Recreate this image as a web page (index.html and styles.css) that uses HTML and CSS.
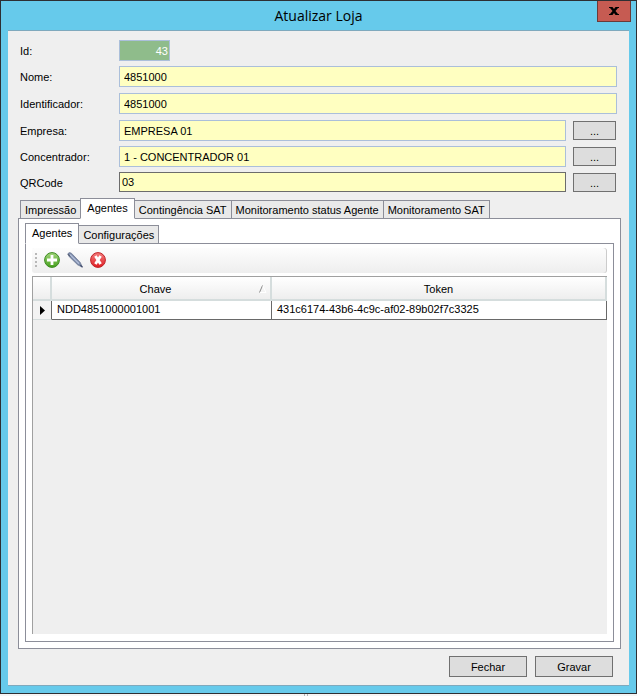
FILE: index.html
```html
<!DOCTYPE html>
<html lang="pt-BR">
<head>
    <meta charset="UTF-8">
    <meta name="viewport" content="width=device-width, initial-scale=1.0">
    <title>Atualizar Loja</title>
    <link rel="stylesheet" href="styles.css">
</head>
<body>
    <div class="window">
        <header class="titlebar">
            <h1>Atualizar Loja</h1>
            <button class="close" type="button" aria-label="Fechar janela">
                <svg width="10" height="8" viewBox="0 0 10 8">
                    <path d="M0 0H3.5L5 2L6.5 0H10V1H9L6.5 4L9 7H10V8H6.5L5 6L3.5 8H0V7H1L3.5 4L1 1H0Z" fill="#000" />
                </svg>
            </button>
        </header>

        <form class="client">
            <!-- Store fields -->
            <div class="fields">
                <div class="row">
                    <label for="id">Id:</label>
                    <input class="id" id="id" type="text" value="43" readonly>
                </div>
                <div class="row tall">
                    <label for="nome">Nome:</label>
                    <input id="nome" type="text" value="4851000">
                </div>
                <div class="row tall">
                    <label for="identificador">Identificador:</label>
                    <input id="identificador" type="text" value="4851000">
                </div>
                <div class="row">
                    <label for="empresa">Empresa:</label>
                    <input id="empresa" type="text" value="EMPRESA 01">
                    <button class="btn browse" type="button">...</button>
                </div>
                <div class="row">
                    <label for="concentrador">Concentrador:</label>
                    <input id="concentrador" type="text" value="1 - CONCENTRADOR 01">
                    <button class="btn browse" type="button">...</button>
                </div>
                <div class="row">
                    <label for="qrcode">QRCode</label>
                    <input class="plain" id="qrcode" type="text" value="03">
                    <button class="btn browse" type="button">...</button>
                </div>
            </div>

            <!-- Outer tabs -->
            <div class="tabs" role="tablist">
                <button class="tab" type="button" role="tab">Impressão</button>
                <button class="tab active" type="button" role="tab" aria-selected="true">Agentes</button>
                <button class="tab" type="button" role="tab">Contingência SAT</button>
                <button class="tab" type="button" role="tab">Monitoramento status Agente</button>
                <button class="tab" type="button" role="tab">Monitoramento SAT</button>
            </div>
            <div class="panel outer">
                <!-- Inner tabs -->
                <div class="tabs inner-tabs" role="tablist">
                    <button class="tab active" type="button" role="tab" aria-selected="true">Agentes</button>
                    <button class="tab" type="button" role="tab">Configurações</button>
                </div>
                <div class="panel inner">
                    <div class="toolbar">
                        <span class="grip"></span>
                        <button class="tool" type="button" aria-label="Adicionar">
                            <svg width="16" height="16" viewBox="0 0 16 16">
                                <defs>
                                    <linearGradient id="green" x2="0" y2="1">
                                        <stop offset="0%" stop-color="#a4d67e" />
                                        <stop offset="100%" stop-color="#45a01c" />
                                    </linearGradient>
                                </defs>
                                <circle cx="8" cy="8" r="7.4" fill="url(#green)" stroke="#3d8b22" />
                                <path d="M8 3V13M3 8H13" stroke="#fff" stroke-width="2.8" />
                            </svg>
                        </button>
                        <button class="tool" type="button" aria-label="Editar">
                            <svg width="16" height="16" viewBox="0 0 16 16">
                                <path d="M0.8 1.8L2.4 0.5L4.4 1.2L13.2 10.4L15.4 15.2L10.6 12.8L1.8 4.2Z" fill="#7d8cab" stroke="#66718c" stroke-width="0.7" />
                                <path d="M3 2.6L12 11.6" stroke="#b9c5dd" stroke-width="1.3" />
                                <path d="M1 2.2L3.2 4.4" stroke="#4d5568" stroke-width="1" />
                                <path d="M13.4 13.2L15.4 15.2" stroke="#3d4968" stroke-width="1.2" />
                            </svg>
                        </button>
                        <button class="tool" type="button" aria-label="Excluir">
                            <svg width="16" height="16" viewBox="0 0 16 16">
                                <defs>
                                    <linearGradient id="red" x2="0" y2="1">
                                        <stop offset="0%" stop-color="#f58080" />
                                        <stop offset="100%" stop-color="#de1c22" />
                                    </linearGradient>
                                </defs>
                                <circle cx="8" cy="8" r="7.4" fill="url(#red)" stroke="#c02429" />
                                <path d="M5.4 4L10.6 12M10.6 4L5.4 12" stroke="#fff" stroke-width="2.8" />
                            </svg>
                        </button>
                    </div>
                    <div class="grid">
                        <table>
                            <colgroup>
                                <col class="col-mark">
                                <col class="col-key">
                                <col>
                            </colgroup>
                            <thead>
                                <tr>
                                    <th></th>
                                    <th>
                                        <div class="head">
                                            <span>Chave</span>
                                            <svg class="sort" width="8" height="8" viewBox="0 0 8 8">
                                                <path d="M0.5 7.5L3.5 0.5" stroke="#8a8a8a" />
                                                <path d="M4 1L7 7.5H1" fill="none" stroke="#fff" />
                                            </svg>
                                        </div>
                                    </th>
                                    <th>Token</th>
                                </tr>
                            </thead>
                            <tbody>
                                <tr>
                                    <td class="mark">
                                        <svg width="5" height="9" viewBox="0 0 5 9">
                                            <path d="M0 0L5 4.5L0 9Z" fill="#000" />
                                        </svg>
                                    </td>
                                    <td>NDD4851000001001</td>
                                    <td>431c6174-43b6-4c9c-af02-89b02f7c3325</td>
                                </tr>
                            </tbody>
                        </table>
                    </div>
                </div>
            </div>

            <footer class="actions">
                <button class="btn" type="button">Fechar</button>
                <button class="btn" type="submit">Gravar</button>
            </footer>
        </form>
    </div>
    <div class="strip"><span class="tick"></span></div>
</body>
</html>
```

FILE: styles.css
```css
* {
    box-sizing: border-box;
}

body {
    margin: 0;
    min-height: 100vh;
    display: flex;
    flex-direction: column;
    background: #f5f5f5;
    color: #000;
    font-family: "Liberation Sans", Arial, sans-serif;
    font-size: 11px;
    line-height: 14px;
}

button,
input {
    margin: 0;
    border-radius: 0;
    color: inherit;
    font: inherit;
}

svg {
    display: block;
}

/* Window frame */
.window {
    flex: 1;
    display: flex;
    flex-direction: column;
    padding: 0 7px 7px;
    border: 1px solid #2d2f33;
    background: #66caeb;
}

.titlebar {
    display: grid;
    grid-template-columns: 1fr auto 1fr;
    height: 29px;
}

.titlebar h1 {
    grid-column: 2;
    margin: 0;
    font-family: "Open Sans", "Noto Sans", sans-serif;
    font-size: 14px;
    font-weight: normal;
    line-height: 30px;
}

.close {
    justify-self: end;
    display: flex;
    align-items: center;
    justify-content: center;
    width: 34px;
    height: 21px;
    margin-right: -2px;
    padding: 0;
    border: 1px solid #6b3a38;
    border-top: 0;
    background: #c65b52;
}

.client {
    flex: 1;
    display: flex;
    flex-direction: column;
    padding: 9px 8px 8px 10px;
    border: solid #7fa9bd;
    border-width: 1px 0;
    background: #efefef;
}

/* Fields */
.fields {
    padding: 0 4px 0 2px;
}

.row {
    display: flex;
    align-items: flex-start;
    height: 26px;
}

.row.tall {
    height: 27px;
}

.row label {
    width: 99px;
    line-height: 22px;
}

.row input {
    flex: 1;
    min-width: 0;
    height: 21px;
    padding: 0 4px;
    border: 1px solid #abbfda;
    background: #ffffc1;
}

.row .id {
    flex: none;
    width: 51px;
    padding: 0 1px;
    background: #8fbc8b;
    color: #fff;
    text-align: right;
}

.row .plain {
    height: 20px;
    padding: 0 2px;
    border-color: #6c6c6c;
}

.btn {
    width: 78px;
    height: 21px;
    padding: 0;
    border: 1px solid #707070;
    background: #dddddd;
}

.browse {
    width: 43px;
    height: 19px;
    margin: 1px 1px 0 7px;
}

/* Tabs */
.tabs {
    display: flex;
    align-items: flex-end;
    height: 21px;
    padding-left: 2px;
}

.tab {
    height: 19px;
    margin-left: -1px;
    padding: 0 4px;
    border: 1px solid #8c8e99;
    background: #e9e9e9;
    white-space: nowrap;
}

.tab:first-child {
    margin-left: 0;
}

.tab.active {
    z-index: 1;
    height: 21px;
    padding: 0 6px 2px;
    border-bottom-color: #fff;
    background: #fff;
}

.panel {
    flex: 1;
    display: flex;
    flex-direction: column;
    margin-top: -1px;
    border: 1px solid #8c8e99;
    background: #fff;
}

.outer {
    padding: 9px 6px 6px;
}

.inner-tabs {
    height: 16px;
    padding-left: 0;
}

.inner {
    padding: 4px 6px 7px;
}

/* Toolbar */
.toolbar {
    display: flex;
    align-items: center;
    gap: 7px;
    height: 25px;
    margin-bottom: 3px;
    padding: 0 0 1px 3px;
    border-radius: 3px;
    background: linear-gradient(#fdfdfd, #eeeeee);
    box-shadow: inset -1px 0 #cccccc;
}

.grip {
    width: 2px;
    height: 14px;
    background: repeating-linear-gradient(#b8b8b8 0 2px, transparent 2px 4px);
}

.tool {
    padding: 0;
    border: 0;
    background: none;
}

/* Data grid */
.grid {
    flex: 1;
    border: solid #a0a0a0;
    border-width: 1px 0 0 1px;
    background: #efefef;
}

.grid table {
    width: 100%;
    table-layout: fixed;
    border-collapse: separate;
    border-spacing: 0;
}

.col-mark {
    width: 19px;
}

.col-key {
    width: 220px;
}

.grid th {
    height: 24px;
    padding: 2px 0 0;
    border-right: 2px solid #d5dddd;
    border-bottom: 2px solid #d5dddd;
    background: linear-gradient(#ffffff, #eeeeee);
    font-weight: normal;
}

.head {
    display: flex;
    align-items: center;
}

.head span {
    flex: 1;
}

.sort {
    margin-right: 3px;
}

.grid td {
    height: 19px;
    padding: 0 5px 2px;
    border-right: 1px solid #696969;
    border-bottom: 1px solid #696969;
    background: #fff;
}

.grid .mark {
    padding: 0 7px;
    border-bottom-color: #d5dddd;
    background: #f3f3f3;
}

/* Footer */
.actions {
    display: flex;
    justify-content: flex-end;
    gap: 8px;
    padding: 7px 8px 0 0;
}

.strip {
    display: flex;
    justify-content: center;
    height: 2px;
    padding-right: 25px;
}

.tick {
    width: 4px;
    border: solid #b5b5b5;
    border-width: 0 1px;
}
```
